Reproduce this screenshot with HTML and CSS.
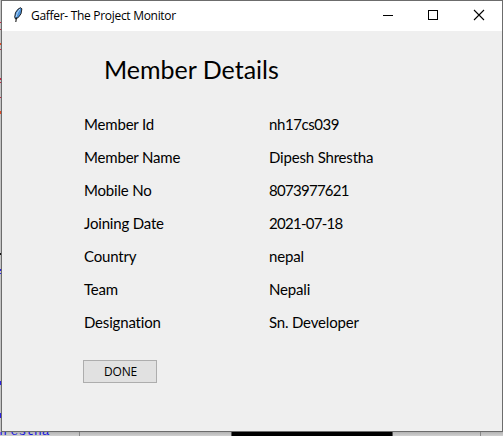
FILE: index.html
```html
<!DOCTYPE html>
<html lang="en">
<head>
<meta charset="utf-8">
<title>Gaffer- The Project Monitor</title>
<link rel="stylesheet" href="styles.css">
</head>
<body>
<div class="desktop">
  <svg class="left-edge" width="1" height="431" shape-rendering="crispEdges">
    <path stroke="#c32946" d="M.5 22v1M.5 29v1M.5 49v1M.5 78v2M.5 82v1M.5 97v1"/>
    <path stroke="#e04b26" d="M.5 43v2M.5 111v3"/>
    <path stroke="#2d20df" d="M.5 269v2M.5 273v1M.5 381v4M.5 413v5"/>
    <path stroke="#111" d="M.5 253v2"/>
  </svg>
  <main class="window">
    <header class="titlebar">
      <svg class="feather" width="16" height="16" viewBox="0 0 16 16">
        <path d="M9.500 .7 7 2.200 4.500 5.500 3.700 10 4.500 12 7.300 10.500 10 6.800 10.900 1.800Z" fill="#4c91d8" stroke="#111" stroke-width=".9"/>
        <path d="M8.800 2 6.300 6 5 10" stroke="#b5d5f4" stroke-width="1" fill="none"/>
        <path d="M5.500 10.500 4.800 15" stroke="#111" stroke-width="1.100" fill="none"/>
      </svg>
      <span class="caption">Gaffer- The Project Monitor</span>
      <svg class="controls" width="103" height="12" viewBox="0 0 103 12" fill="none" stroke="#000">
        <path d="M0 6.500H10" shape-rendering="crispEdges"/>
        <path d="M45.500 1.500h9v9h-9z" shape-rendering="crispEdges"/>
        <path d="M91 1 101 11M101 1 91 11" stroke-width="1.100"/>
      </svg>
    </header>
    <h1>Member Details</h1>
    <dl>
      <dt>Member Id</dt><dd class="mixed">nh17cs039</dd>
      <dt>Member Name</dt><dd>Dipesh Shrestha</dd>
      <dt>Mobile No</dt><dd class="digits">8073977621</dd>
      <dt>Joining Date</dt><dd class="digits">2021-07-18</dd>
      <dt>Country</dt><dd>nepal</dd>
      <dt>Team</dt><dd>Nepali</dd>
      <dt>Designation</dt><dd>Sn. Developer</dd>
    </dl>
    <button>DONE</button>
  </main>
  <div class="behind"><span class="code">hrestha</span><span class="panel"><span class="screen"></span></span></div>
</div>
</body>
</html>
```
FILE: styles.css
```css
* { box-sizing: border-box; }
body { margin: 0; width: 503px; height: 436px; overflow: hidden; }
.desktop {
  display: grid;
  grid-template: 432px 4px / 1px 502px;
  background: #c4c4c4;
}
.left-edge { display: block; }
.window {
  background: #efefef;
  border: 1px solid #6c6c6c;
  color: #000;
  font-family: Lato, sans-serif;
}
.titlebar {
  display: flex;
  align-items: center;
  height: 30px;
  background: #fff;
  padding: 0 16px 0 9px;
}
.feather { margin-right: 4px; position: relative; top: -1px; }
.caption {
  font: 12px/16px "Open Sans", sans-serif;
  letter-spacing: -.3px;
}
.controls { margin-left: auto; position: relative; top: -1px; }
h1 {
  margin: 22px 0 0 102px;
  font-size: 25px;
  line-height: 32px;
  font-weight: 400;
}
dl {
  display: grid;
  grid-template-columns: 185px 200px;
  grid-auto-rows: 33px;
  margin: 23px 0 0 82px;
  font-size: 15px;
  line-height: 33px;
  letter-spacing: -.18px;
  font-variant-ligatures: none;
}
dt, dd { margin: 0; white-space: nowrap; }
.mixed { letter-spacing: -.42px; }
.digits { letter-spacing: -.72px; }
button {
  display: block;
  width: 74px;
  height: 23px;
  margin: 21px 0 0 81px;
  padding: 0 0 0 1px;
  border: 1px solid #adadad;
  background: #e1e1e1;
  color: #000;
  font: 12px/20px "Open Sans", sans-serif;
  letter-spacing: -.2px;
}
.behind {
  grid-column: 1 / 3;
  display: flex;
  height: 4px;
  overflow: hidden;
  background: linear-gradient(#b4b4b4, #d0d0d0);
}
.code {
  width: 79px;
  font: 13px/14px "Liberation Mono", monospace;
  color: #1515e0;
  margin-top: -7px;
  text-indent: -5px;
}
.panel {
  display: flex;
  width: 402px;
  border: solid #888;
  border-width: 0 1px;
  padding-left: 151px;
}
.screen { width: 162px; background: #000; border: solid #555; border-width: 0 1px; }
```
